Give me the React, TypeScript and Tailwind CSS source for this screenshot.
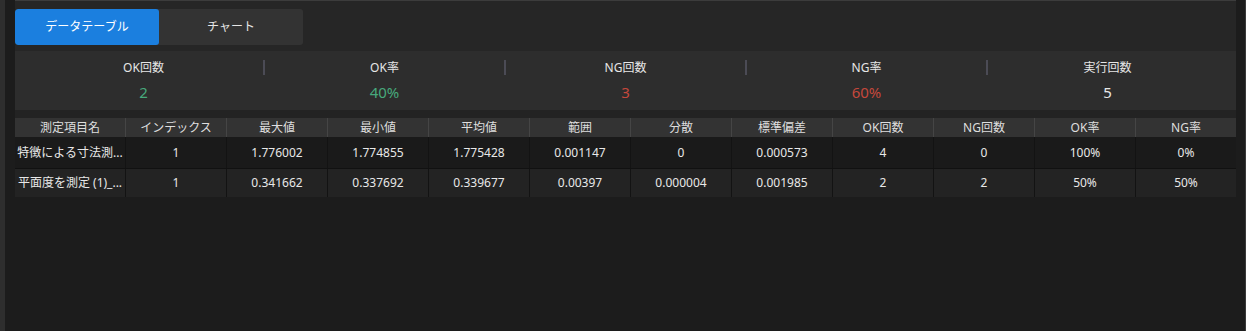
import React, { useState } from "react";

const stats = [
	{ label: "OK回数", value: "2", color: "text-[#47a97c]" },
	{ label: "OK率", value: "40%", color: "text-[#47a97c]" },
	{ label: "NG回数", value: "3", color: "text-[#c5483c]" },
	{ label: "NG率", value: "60%", color: "text-[#c5483c]" },
	{ label: "実行回数", value: "5", color: "text-[#e8e8e8]" },
];

const headers = [
	"測定項目名",
	"インデックス",
	"最大値",
	"最小値",
	"平均値",
	"範囲",
	"分散",
	"標準偏差",
	"OK回数",
	"NG回数",
	"OK率",
	"NG率",
];

const rows = [
	["特徴による寸法測...", "1", "1.776002", "1.774855", "1.775428", "0.001147", "0", "0.000573", "4", "0", "100%", "0%"],
	["平面度を測定 (1)_...", "1", "0.341662", "0.337692", "0.339677", "0.00397", "0.000004", "0.001985", "2", "2", "50%", "50%"],
];

const App = () => {
	const [tab, setTab] = useState("table");

	return (
		<div
			className="flex w-[1246px] h-[331px] bg-[#1c1c1c] text-[#e8e8e8] overflow-hidden"
			style={{ fontFamily: '"Noto Sans", "Noto Sans CJK JP", sans-serif' }}
		>
			<div className="w-[5px] bg-[#2e2e2e]" />
			<div className="w-[10px] bg-[#1c1c1c]" />
			<main className="w-[1221px] flex flex-col border-t border-t-[#3c3c3c]">
				{/* tabs */}
				<div className="h-[50px] bg-[#262626] pt-[8px]">
					<div className="flex w-[288px] h-[36px] rounded-[3px] bg-[#333333] overflow-hidden">
						<button
							className={`w-[144px] h-full text-[12px] text-white rounded-[3px] ${tab === "table" ? "bg-[#1b7fdf]" : ""}`}
							onClick={() => setTab("table")}
						>
							データテーブル
						</button>
						<button
							className={`w-[144px] h-full text-[12px] text-[#e6e6e6] rounded-[3px] ${tab === "chart" ? "bg-[#1b7fdf]" : ""}`}
							onClick={() => setTab("chart")}
						>
							チャート
						</button>
					</div>
				</div>

				{/* summary */}
				<div className="h-[59px] bg-[#2d2d2d] px-[8px] flex">
					{stats.map((s, i) => (
						<div key={s.label} className="relative flex-1 flex flex-col items-center pt-[7px]">
							<span className="text-[12px] leading-[20px] text-[#e6e6e6]">{s.label}</span>
							<span className={`text-[15px] leading-[22px] mt-[3px] ${s.color}`}>{s.value}</span>
							{i < stats.length - 1 ? (
								<span className="absolute right-[-1px] top-[9px] w-[2px] h-[15px] bg-[#4b4b55]" />
							) : null}
						</div>
					))}
				</div>

				<div className="h-[8px] bg-[#232323]" />

				{/* table */}
				<div className="grid grid-cols-[110px_repeat(11,101px)] text-[12px]">
					{headers.map((h, i) => (
						<div
							key={h}
							className={`h-[19px] leading-[19px] bg-[#333333] text-center text-[#dedede] ${i > 0 ? "border-l border-l-[#454545]" : ""}`}
						>
							{h}
						</div>
					))}
					{rows.map((r, ri) =>
						r.map((c, ci) => (
							<div
								key={`${ri}-${ci}`}
								className={`${ri === 0 ? "h-[31px] bg-[#1a1a1a]" : "h-[29px] bg-[#232323] border-t border-t-[#111111]"} flex items-center justify-center whitespace-nowrap ${ci > 0 ? "border-l border-l-[#131313]" : ""}`}
							>
								{c}
							</div>
						))
					)}
				</div>
				<div className="flex-1 bg-[#1c1c1c]" />
			</main>
			<div className="w-[9px] bg-[#1c1c1c]" />
			<div className="w-[1px] bg-[#3a3a3a]" />
		</div>
	);
};

export default App;
